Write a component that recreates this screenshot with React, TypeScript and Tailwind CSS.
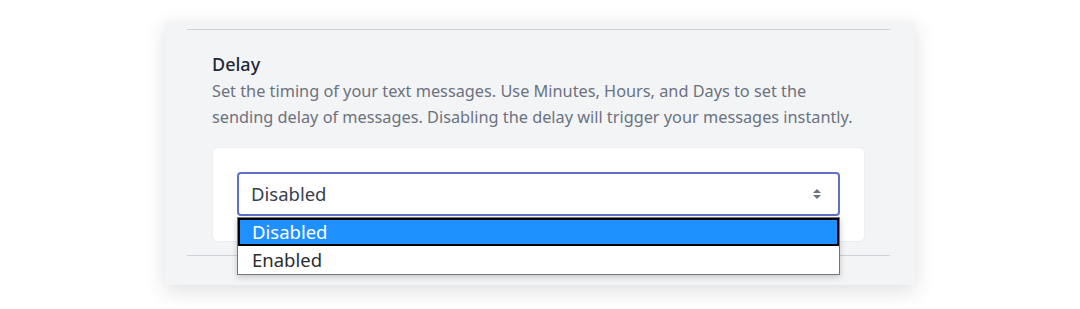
import { useState } from "react";

const font = { fontFamily: '"Noto Sans", "Open Sans", sans-serif' };

function SortArrows() {
  return (
    <svg width="10" height="12" viewBox="0 0 10 12" className="text-[#6b7280]">
      <path d="M5 1 L9 5 H1 Z" fill="currentColor" />
      <path d="M5 11 L9 7 H1 Z" fill="currentColor" />
    </svg>
  );
}

export default function App() {
  const [value] = useState("Disabled");
  const options = ["Disabled", "Enabled"];

  return (
    <div className="min-h-screen bg-white pt-[21px]" style={font}>
      <div className="mx-auto w-[750px] bg-[#f3f4f6] pl-[22px] pr-[25px] pt-[8px] pb-[29px] shadow-[0_6px_20px_rgba(0,0,0,0.13)]">
        <div className="border-t border-[#cbd2d9] px-[25px] pt-[21px]">
          <h3 className="text-[18px] leading-[27px] font-medium text-[#1f2937]">Delay</h3>
          <p className="text-[16.3px] leading-[26px] text-[#6b7280]">
            Set the timing of your text messages. Use Minutes, Hours, and Days to set the
            <br />
            sending delay of messages. Disabling the delay will trigger your messages instantly.
          </p>

          <div className="mt-[17px] rounded-md border border-[#eceef1] bg-white px-[24px] pt-[24px] pb-[25px]">
            <div className="relative">
              <div className="flex h-[44px] items-center justify-between rounded-[4px] border-2 border-[#6070cc] pl-[12px] pr-[16px]">
                <span className="text-[18.5px] text-[#374151]">{value}</span>
                <SortArrows />
              </div>

              <ul className="absolute left-0 top-[45px] w-[603px] border border-[#767676] bg-white shadow-[0_2px_6px_rgba(0,0,0,0.2)]">
                {options.map((opt) => (
                  <li
                    key={opt}
                    className={
                      opt === value
                        ? "h-[28px] border-2 border-black bg-[#1e90ff] pl-[12px] text-[18.5px] leading-[24px] text-white"
                        : "h-[28px] pl-[14px] text-[18.5px] leading-[28px] text-[#2d2d2d]"
                    }
                  >
                    {opt}
                  </li>
                ))}
              </ul>
            </div>
          </div>
        </div>
        <div className="mt-[13px] border-t border-[#cbd2d9]" />
      </div>
    </div>
  );
}
